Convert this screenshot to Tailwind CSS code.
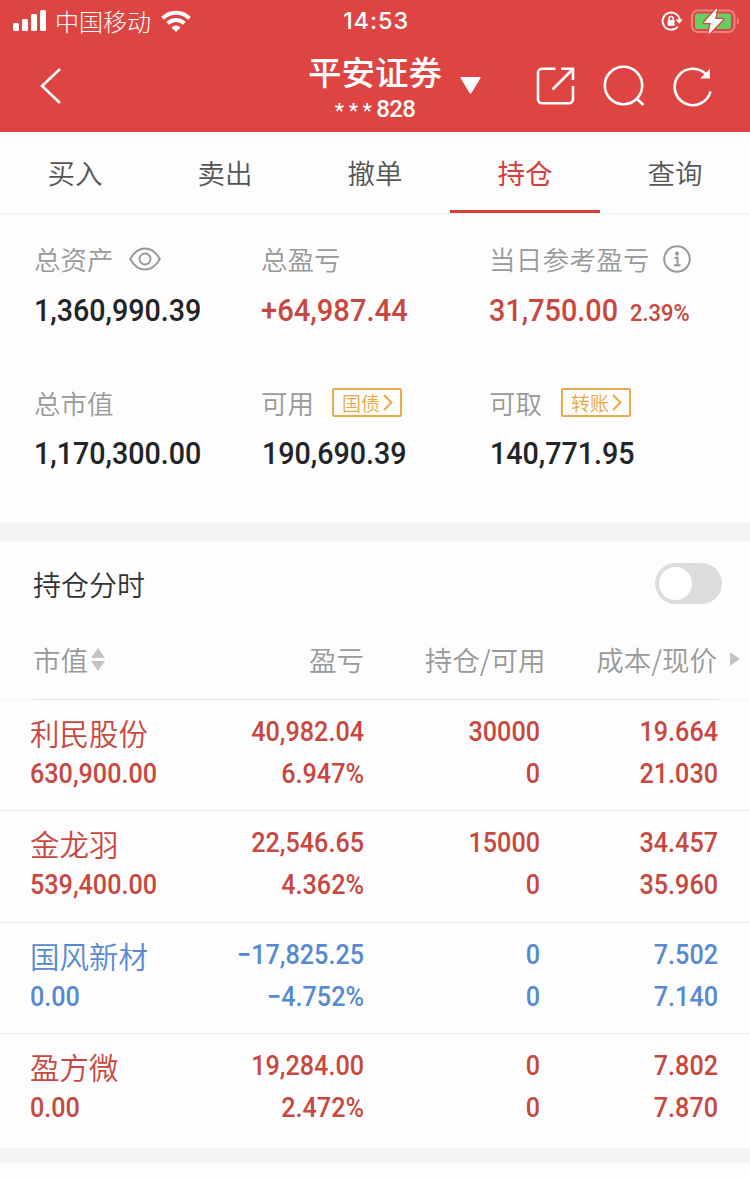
<!DOCTYPE html>
<html lang="zh-CN">
  <head>
    <meta charset="UTF-8" />
    <meta name="viewport" content="width=device-width, initial-scale=1" />
    <title>平安证券 - 持仓</title>
    <script src="https://cdn.jsdelivr.net/npm/@tailwindcss/browser@4"></script>
  </head>
  <body class="bg-[#fdfdfd] h-[1180px] overflow-hidden font-['Noto_Sans_CJK_SC',sans-serif] font-[350] whitespace-nowrap">
    <header class="bg-[#de4441] text-white h-[132px] flex flex-col">
      <!-- status bar -->
      <div class="h-10 grid grid-cols-3 items-center pl-[13px] pr-[11px]">
        <div class="flex items-center">
          <svg class="w-[33px] h-[22px] mb-[2px]" viewBox="0 0 33 22" fill="currentColor">
            <rect x="0" y="14" width="6" height="8" rx="1.5" />
            <rect x="9" y="10" width="6" height="12" rx="1.5" />
            <rect x="18" y="5" width="6" height="17" rx="1.5" />
            <rect x="27" y="1" width="6" height="21" rx="1.5" />
          </svg>
          <span class="ml-[9px] text-[24px] leading-10 font-light">中国移动</span>
          <svg class="ml-[10px] mb-px w-[30px] h-[22px]" viewBox="0 0 30 22" fill="none" stroke="currentColor" stroke-width="4">
            <path d="M1.6 8.3a19 19 0 0 1 26.8 0" />
            <path d="M6.7 13.4a11.8 11.8 0 0 1 16.6 0" />
            <path d="M15 22l-4.6-4.6a6.5 6.5 0 0 1 9.2 0z" fill="currentColor" stroke="none" />
          </svg>
        </div>
        <div class="text-center text-[23.5px] leading-[42px] font-medium font-['Inter',sans-serif] tracking-[0.9px]">14:53</div>
        <div class="flex items-center justify-end">
          <svg class="w-[22px] h-[20px]" viewBox="0 0 22 20" fill="none" stroke="currentColor" stroke-width="1.9">
            <path d="M16.8 15.6a8.6 8.6 0 1 1 2-6" />
            <path d="M14.500 8.600h7.200l-3.500 4.200z" fill="currentColor" stroke="none" />
            <rect x="6.600" y="9" width="7" height="5.800" rx=".8" fill="currentColor" stroke="none" />
            <path d="M8 9.500V7.600a2.100 2.100 0 0 1 4.200 0v1.900" stroke-width="1.400" />
          </svg>
          <svg class="ml-[8px] mb-px w-[48px] h-[26px]" viewBox="0 0 48 26">
            <rect x="1" y="2.5" width="42.500" height="21.500" rx="6" fill="none" stroke="#ec8380" stroke-width="2" />
            <rect x="4" y="5.5" width="36" height="15.500" rx="3" fill="#65cf63" />
            <path d="M46 9.500q2 1 2 3.800t-2 3.800z" fill="#ec8380" />
            <path d="M25.500 1L13.500 14.500h7L18 25.500 31.500 11.500h-8z" fill="#de4441" stroke="#de4441" stroke-width="3.600" stroke-linejoin="round" />
            <path d="M25.500 1L13.500 14.500h7L18 25.500 31.500 11.500h-8z" fill="#fff" stroke="#fff" stroke-width="1" stroke-linejoin="round" />
          </svg>
        </div>
      </div>
      <!-- account bar -->
      <div class="flex-1 grid grid-cols-[308px_134px_1fr]">
        <svg class="mt-[27px] ml-[40px] w-[22px] h-[38px]" viewBox="0 0 22 38" fill="none" stroke="currentColor" stroke-width="2.600">
          <path d="M20 2L2 19l18 17" />
        </svg>
        <div class="flex flex-col items-center">
          <h1 class="h-[56px] -mt-[1px] leading-[64px] text-[33.5px] font-medium">平安证券</h1>
          <p class="h-7 leading-7 text-[24px] font-medium font-['Roboto',sans-serif] flex items-center"><span class="tracking-[4.5px] pt-[4px] text-[21px]">***</span><span class="tracking-[-0.7px]">828</span></p>
        </div>
        <div class="flex items-start text-white">
          <svg class="mt-[37px] ml-[18px] w-[21px] h-[17px]" viewBox="0 0 21 17" fill="currentColor">
            <path d="M1 0h19q1 0 .5 1l-9 15q-1 1.500-2 0L.5 1Q0 0 1 0z" />
          </svg>
          <svg class="mt-[26px] ml-[55px] w-[39px] h-[39px]" viewBox="0 0 39 39" fill="none" stroke="currentColor" stroke-width="2.600">
            <path d="M19.500 2.800H6a4 4 0 0 0-4 4v26.500a4 4 0 0 0 4 4h27a4 4 0 0 0 4-4V20" />
            <path d="M25 2.800h12V14M36.500 3.500L16.500 23.500" />
          </svg>
          <svg class="mt-[25px] ml-[28px] w-[42px] h-[42px]" viewBox="0 0 42 42" fill="none" stroke="currentColor" stroke-width="2.600">
            <circle cx="20.500" cy="20.500" r="18.700" />
            <path d="M33 33l7.500 7" />
          </svg>
          <svg class="mt-[26px] ml-[27px] w-[41px] h-[41px]" viewBox="0 0 40 41" fill="none" stroke="currentColor" stroke-width="2.600">
            <path d="M38 25.500A18.200 18.200 0 1 1 34.500 9.500" />
            <path d="M36.500 5v6.500h-6.500z" fill="currentColor" stroke-width="1.800" />
          </svg>
        </div>
      </div>
    </header>

    <nav class="h-[82px] grid grid-cols-5 text-center text-[27.5px] leading-[81px] text-[#555] border-b border-[#eee]">
      <a>买入</a>
      <a>卖出</a>
      <a>撤单</a>
      <a class="h-[81px] text-[#d5403d] font-normal border-b-[3px] border-[#d5403d]">持仓</a>
      <a>查询</a>
    </nav>

    <!-- asset summary -->
    <section class="h-[308px] pt-[20px] pl-[34px] grid grid-cols-[227px_228px_1fr] grid-rows-[144px_144px] text-[26.5px] text-[#999]">
      <div>
        <div class="h-[50px] flex items-center">
          <span>总资产</span>
          <svg class="ml-[15px] w-[32px] h-[24px]" viewBox="0 0 32 24" fill="none" stroke="currentColor" stroke-width="1.900">
            <path d="M1.200 12Q7 1.500 16 1.500T30.800 12Q25 22.500 16 22.500T1.200 12z" />
            <circle cx="16" cy="12" r="5.500" />
          </svg>
        </div>
        <div class="h-[52px] leading-[54px] font-['Roboto',sans-serif] font-medium text-[31.5px] text-[#222427] origin-left scale-x-[0.91]">1,360,990.39</div>
      </div>
      <div>
        <div class="h-[50px] flex items-center">总盈亏</div>
        <div class="h-[52px] leading-[54px] font-['Roboto',sans-serif] font-medium text-[31.5px] text-[#c8473f] origin-left scale-x-[0.925]">+64,987.44</div>
      </div>
      <div>
        <div class="h-[50px] flex items-center">
          <span class="tracking-[0.3px]">当日参考盈亏</span>
          <svg class="ml-[13px] w-[28px] h-[28px]" viewBox="0 0 28 28" fill="none" stroke="currentColor" stroke-width="2">
            <circle cx="14" cy="14" r="12.800" />
            <circle cx="14" cy="8.500" r="2" fill="currentColor" stroke="none" />
            <path d="M11.500 12.700H14.500V20M11 20.300h6.500" />
          </svg>
        </div>
        <div class="h-[52px] leading-[54px] font-['Roboto',sans-serif] font-medium text-[31.5px] text-[#c8473f] origin-left scale-x-[0.915]">31,750.00<span class="ml-[13px] text-[24px]">2.39%</span></div>
      </div>
      <div>
        <div class="h-[50px] flex items-center">总市值</div>
        <div class="h-[52px] leading-[52px] font-['Roboto',sans-serif] font-medium text-[31.5px] text-[#222427] origin-left scale-x-[0.91]">1,170,300.00</div>
      </div>
      <div>
        <div class="h-[50px] flex items-center">
          <span>可用</span>
          <a class="mb-px ml-[18px] w-[70px] h-[29px] border-2 border-[#e9ab4d] rounded-[2px] text-[#e9a845] text-[19px] leading-[24px] flex items-center pl-[8px]">国债<svg class="ml-[3px] w-[10px] h-[17px]" viewBox="0 0 10 17" fill="none" stroke="currentColor" stroke-width="2"><path d="M1 1l7.500 7.500L1 16" /></svg></a>
        </div>
        <div class="h-[52px] pl-px leading-[52px] font-['Roboto',sans-serif] font-medium text-[31.5px] text-[#222427] origin-left scale-x-[0.91]">190,690.39</div>
      </div>
      <div>
        <div class="h-[50px] flex items-center">
          <span>可取</span>
          <a class="mb-px ml-[19px] w-[70px] h-[29px] border-2 border-[#e9ab4d] rounded-[2px] text-[#e9a845] text-[19px] leading-[24px] flex items-center pl-[8px]">转账<svg class="ml-[3px] w-[10px] h-[17px]" viewBox="0 0 10 17" fill="none" stroke="currentColor" stroke-width="2"><path d="M1 1l7.500 7.500L1 16" /></svg></a>
        </div>
        <div class="h-[52px] pl-px leading-[52px] font-['Roboto',sans-serif] font-medium text-[31.5px] text-[#222427] origin-left scale-x-[0.91]">140,771.95</div>
      </div>
    </section>

    <div class="h-[19px] bg-[#f4f4f4]"></div>

    <!-- intraday switch -->
    <div class="h-[84px] pl-[33px] pr-[28px] flex items-center justify-between">
      <span class="pt-[2px] text-[28px] text-[#333]">持仓分时</span>
      <span class="w-[67px] h-[41px] rounded-full bg-[#dcdcdc] p-1"><span class="block size-[33px] rounded-full bg-white"></span></span>
    </div>

    <!-- table head -->
    <div class="h-[74px] pl-[33px] grid grid-cols-[147px_184px_181.500px_171.500px_1fr] leading-[69px] text-[27.5px] text-[#999] text-right">
      <div class="flex items-center h-[69px]">
        市值
        <svg class="ml-[3px] w-[14px] h-[23px]" viewBox="0 0 14 23" fill="#c4c4c4">
          <path d="M7 0l7 10H0zM7 23l7-10H0z" />
        </svg>
      </div>
      <div>盈亏</div>
      <div>持仓/可用</div>
      <div>成本/现价</div>
      <svg class="mt-[27px] ml-[13px] w-[10px] h-[14px]" viewBox="0 0 10 14" fill="#c4c4c4">
        <path d="M0 0l10 7-10 7z" />
      </svg>
    </div>
    <div class="h-px bg-[#f4f4f4] pl-[33px] pr-[32px]"><div class="h-px bg-[#e4e4e4]"></div></div>

    <!-- positions -->
    <div id="positions" class="h-[448px]"></div>

    <div class="h-[15px] bg-[#f4f4f4]"></div>

    <script>
      const positions = [
        { name: "利民股份", value: "630,900.00", profit: "40,982.04", rate: "6.947%", qty: "30000", usable: "0", cost: "19.664", price: "21.030" },
        { name: "金龙羽", value: "539,400.00", profit: "22,546.65", rate: "4.362%", qty: "15000", usable: "0", cost: "34.457", price: "35.960" },
        { name: "国风新材", value: "0.00", profit: "−17,825.25", rate: "−4.752%", qty: "0", usable: "0", cost: "7.502", price: "7.140" },
        { name: "盈方微", value: "0.00", profit: "19,284.00", rate: "2.472%", qty: "0", usable: "0", cost: "7.802", price: "7.870" },
      ];

      const pair = (a, b) => `
        <div class="text-right origin-right scale-x-[0.915]">
          <div class="h-[42px]">${a}</div>
          <div class="h-[42px]">${b}</div>
        </div>`;

      document.getElementById("positions").innerHTML = positions
        .map(
          (p) => `
        <div class="h-[111.3px] pt-[11px] pl-[30px] grid grid-cols-[150px_184px_176px_178px] font-['Roboto',sans-serif] font-medium text-[27.5px] leading-[42px] border-b border-[#ececec] last:border-b-0 ${
          p.profit.startsWith("−") ? "text-[#5789d2]" : "text-[#c8473f]"
        }">
          <div>
            <div class="h-[42px] font-['Noto_Sans_CJK_SC',sans-serif] font-[350] text-[29.5px]">${p.name}</div>
            <div class="h-[42px] origin-left scale-x-[0.915]">${p.value}</div>
          </div>
          ${pair(p.profit, p.rate)}
          ${pair(p.qty, p.usable)}
          ${pair(p.cost, p.price)}
        </div>`
        )
        .join("");
    </script>
  </body>
</html>
